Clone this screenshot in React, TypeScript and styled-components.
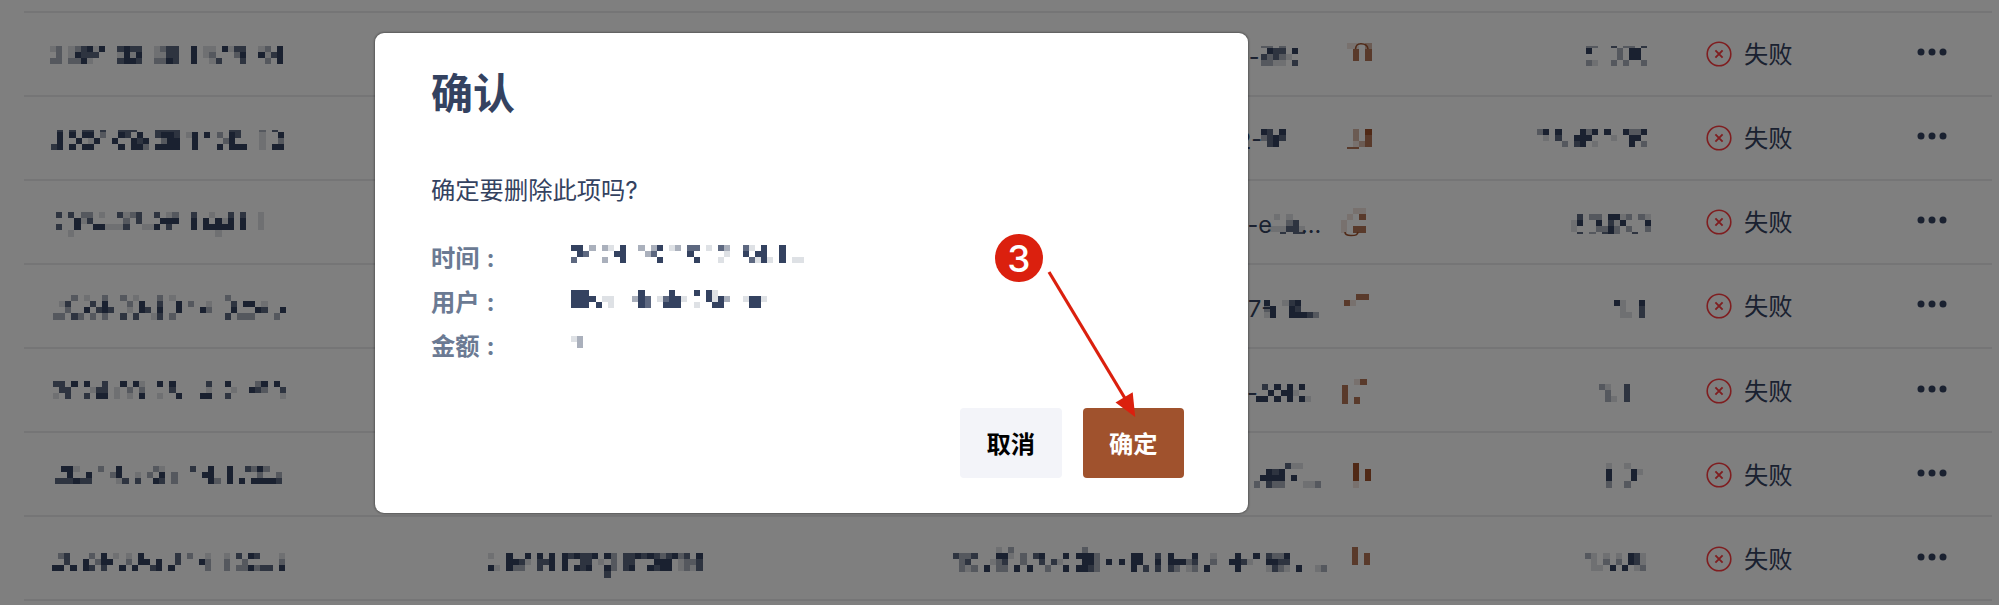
import React from 'react';
import styled, { createGlobalStyle } from 'styled-components';

const INK = '#344260';
const RUST = '#a0522d';
const CELL = 6.13;
const LEVELS: Record<string, number> = { '1': 0.16, '2': 0.42, '3': 0.8, '4': 1 };

const GlobalStyle = createGlobalStyle`
  * { box-sizing: border-box; }
  body {
    margin: 0;
    overflow: hidden;
    background: #fff;
    color: ${INK};
    font-family: Inter, "Noto Sans CJK SC", sans-serif;
    font-size: 24.3px;
  }
`;

const Page = styled.main`
  position: relative;
  width: 1999px;
  height: 605px;
  overflow: hidden;
`;

const Table = styled.section`
  display: flex;
  flex-direction: column;
  padding: 10.6px 7px 0 24px;
`;

const Row = styled.div`
  display: grid;
  grid-template-columns: 436px 480px 400px 105px 246px 199px 1fr;
  height: 84.12px;
  flex: none;
  border-top: 2px solid #eaeaec;
`;

const Cell = styled.div`
  display: flex;
  align-items: flex-start;
  min-width: 0;
  overflow: visible;
`;

const IdText = styled.span<{ $x: number }>`
  width: 0;
  white-space: pre;
  font-size: 23.5px;
  line-height: 28px;
  padding-top: 30px;
  margin-left: ${(p) => p.$x}px;
  margin-right: ${(p) => -p.$x}px;
`;

const Status = styled(Cell)`
  align-items: center;
  gap: 12.5px;
  padding: 1px 0 0 14.5px;
  line-height: 36px;
`;

const Actions = styled(Cell)`
  padding: 34.5px 0 0 26.3px;
`;

const Scrim = styled.div`
  position: absolute;
  inset: 0;
  display: flex;
  align-items: flex-start;
  padding: 32.5px 0 0 375px;
  background: rgba(0, 0, 0, 0.5);
`;

const Dialog = styled.div`
  display: flex;
  flex-direction: column;
  width: 872.5px;
  height: 480px;
  padding: 30px 63.5px 34.5px 56px;
  border-radius: 9px;
  background: #fff;
  box-shadow: 0 0 2px 1px rgba(0, 0, 0, 0.3);
`;

const Title = styled.h2`
  margin: 0;
  font-size: 42px;
  line-height: 62px;
  font-weight: 700;
`;

const Question = styled.p`
  margin: 47px 0 0;
  line-height: 36px;
`;

const Details = styled.dl`
  display: grid;
  grid-template-columns: 140px 1fr;
  grid-auto-rows: 44px;
  margin: 28px 0 0;
`;

const Label = styled.dt`
  display: flex;
  gap: 6px;
  color: #6b7a93;
  font-weight: 700;
  line-height: 44px;
`;

const Colon = styled.span`
  width: 10px;
  padding-left: 1px;
`;

const Value = styled.dd`
  display: flex;
  margin: 0;
`;

const Buttons = styled.div`
  display: flex;
  justify-content: flex-end;
  gap: 21px;
  margin-top: auto;
`;

const Button = styled.button<{ $primary?: boolean }>`
  width: 101.5px;
  height: 70px;
  padding: 1.5px 0 0;
  border: 0;
  border-radius: 4px;
  background: ${(p) => (p.$primary ? RUST : '#f3f4f9')};
  color: ${(p) => (p.$primary ? '#fff' : '#000')};
  font: inherit;
  font-weight: 700;
  line-height: 68px;
`;

const Badge = styled.div`
  position: absolute;
  left: 995px;
  top: 234px;
  width: 47.5px;
  height: 48px;
  border-radius: 50%;
  background: #db200e;
  color: #fff;
  font-size: 37px;
  font-weight: 500;
  line-height: 50px;
  text-align: center;
`;

const Arrow = styled.svg`
  position: absolute;
  left: 1040px;
  top: 262px;
`;

const MosaicSvg = styled.svg<{ $x: number; $y: number }>`
  display: block;
  flex: none;
  overflow: visible;
  margin: ${(p) => p.$y}px 0 0 ${(p) => p.$x}px;
`;

interface MosaicData {
  x: number;
  y: number;
  rows: string[];
  cap?: string;
  foot?: string;
  arc?: string;
}

function Mosaic({ x, y, rows, cap, foot, arc, color = INK }: MosaicData & { color?: string }) {
  const bands = rows.map((cells, r) => ({ cells, top: r * CELL, h: CELL }));
  if (cap) bands.push({ cells: cap, top: -2, h: 2 });
  if (foot) bands.push({ cells: foot, top: rows.length * CELL, h: 2 });
  return (
    <MosaicSvg $x={x} $y={y} width={1} height={rows.length * CELL} fill={color} shapeRendering="crispEdges">
      {bands.map((b) =>
        b.cells.split('').map((c, i) =>
          LEVELS[c] ? (
            <rect key={b.top + '-' + i} x={i * CELL} y={b.top} width={CELL} height={b.h} opacity={LEVELS[c]} />
          ) : null
        )
      )}
      {arc && <path d={arc} fill="none" stroke={color} strokeWidth="1.6" shapeRendering="auto" />}
    </MosaicSvg>
  );
}

interface RowData {
  time: MosaicData;
  user?: MosaicData;
  id: MosaicData;
  idText?: { x: number; text: string }[];
  link: MosaicData;
  amount: MosaicData;
}

/* x is measured from the left edge of the cell, y from the top of the row */
const ROWS: RowData[] = [
  {
    time: {
      x: 26, y: 33,
      rows: [
        '12.123414..3433..1233..4.11.4133..12.4',
        '.2.14333...1414..1133..4.12...24..4134',
        '22.2241....3443..2243..4..13...3...2.4',
      ],
    },
    id: { x: 320.5, y: 35.5, rows: ['.433.4', '32321.', '2211.3'], cap: '22.2' },
    idText: [{ x: 295, text: 'e-' }],
    link: { x: 6.7, y: 30, rows: ['11.2', '.3.3', '.3.3'], arc: 'M8.5 6C9 .5 12 .7 14 .7C17 .7 20.5 1 21 6' },
    amount: { x: 140.5, y: 35.5, rows: ['4....2.44.', '.....2.44.', '21..2.2..2'], cap: '22..3.22.3' },
  },
  {
    time: {
      x: 27, y: 35,
      rows: [
        '.4.4.44.2..43.4..3443.14.4.2.43...1..4',
        '.4..4.14..4..434..244..4....24....1..2',
        '34.4.44....4.442.4444..4...4.444..1.44',
      ],
      cap: '.3.3.33.3..333...3333........33...2.3',
    },
    id: { x: 321, y: 32, rows: ['43.4', '2343', '.34.'] },
    idText: [{ x: 297, text: '2-' }],
    link: { x: 6.5, y: 32, rows: ['.2.4', '.2.3', '.123'], foot: '33' },
    amount: { x: 91.5, y: 32, rows: ['24.4...424.4..4224', '.1.3..444...1..44', '....2.34.1.....4.2'] },
  },
  {
    time: {
      x: 32.3, y: 31,
      rows: [
        '3.3.22.1..3123..3.12..3..1..3.3..1',
        '...413.....2.3...444..4.4.414.4..1',
        '3..4..441113..114.3...4.44444.4..1',
        '..1.......................1',
      ],
    },
    id: { x: 327.7, y: 33, rows: ['.1.1', '...23', '111331'], foot: '..3.33' },
    idText: [{ x: 294, text: 'c-e' }, { x: 361, text: '...' }],
    link: { x: 1.3, y: 27, rows: ['..11', '.1.3', '1...', '1.33'], arc: 'M4 24C4 27 6 27.5 10 27.5C15 27.5 16.5 27 17 24' },
    amount: { x: 125.7, y: 33, rows: ['.3.22.4412.21', '14..4.314...4', '1...2242.2..2'], foot: '.3.2.342..3' },
  },
  {
    time: {
      x: 28.7, y: 30.5,
      rows: [
        '...2.1..2..2.1...2.1........2',
        '.13...3.4...2.4..3..4.2..1...3.44.1',
        '..2..4.343..1.43.4..4...42...4...43..4',
        '22.32.2.2..3.3..13.2........3.222...2',
      ],
    },
    id: { x: 324, y: 35, rows: ['4..134', '24..43', '14..44432'] },
    idText: [{ x: 308, text: '7-' }],
    link: { x: 4, y: 29.5, rows: ['..33', '31'] },
    amount: { x: 168.7, y: 35, rows: ['41..4', '.1..3', '.11.3'] },
  },
  {
    time: {
      x: 28.7, y: 31.5,
      rows: [
        '33.4.4..3..4.41..4.4.....3..4....24.4',
        '.33...133.1.2.2....3.....1...1..432..3',
        '1.3..3.44.1.1.4..1..4...44..3........1',
      ],
    },
    id: { x: 316, y: 35, rows: ['.3.4.4.4', '..4.441', '44.4.4.41'] },
    idText: [{ x: 307, text: '-' }],
    link: { x: 1.7, y: 29.5, rows: ['..13', '3', '3', '3.3'] },
    amount: { x: 154.3, y: 35, rows: ['21..3', '.2..3', '.21.3'] },
  },
  {
    time: {
      x: 30.7, y: 33,
      rows: [
        '.441...2..4.....21....3..4..4..3242',
        '..4..4...24..1.2.4.2....44..4....2..2',
        '333433....13.3..43.2.....42.4.4.44443',
      ],
    },
    id: { x: 314.3, y: 30, rows: ['.....311', '..434', '.4444.4', '2.322...112'] },
    link: { x: 13, y: 30, rows: ['4', '4.4', '4.4', '1'] },
    amount: { x: 160.7, y: 30, rows: ['1..1', '4...41', '4...4', '2..2'] },
  },
  {
    time: {
      x: 28.3, y: 35.5,
      rows: [
        '.23...2.4.1.1.4.....3.2..1..1.3.43...1',
        '..3..4.244..2.44.4..3...42..2..2.....2',
        '44.4.43.3..4.4..34.4.....2..2.224233.4',
      ],
    },
    user: {
      x: 28, y: 35.5,
      rows: [
        '1..4..4.4.4.434334.42.33434323423.4',
        '...4431.334.4..33.1.2.33...444.1223',
        '41.422..3.4.4.434..42.34..4344.1213',
        '...................3',
      ],
    },
    id: {
      x: 13, y: 29.3,
      rows: [
        '.......1.2...........2',
        '3223...441.2.34...4.4442.....44..3.4...4..1...4..4.3224',
        '.23...123..2..3.31...442.4.4.44..4.44423..2..4431..4433',
        '.212.4.22.4.4..2..4.4432.....4.3.3.32.12.4....4....1321.4..12',
      ],
    },
    link: { x: 11.7, y: 29.3, rows: ['3', '3.3', '3.3'] },
    amount: { x: 139.7, y: 35.5, rows: ['21.1.1.431', '.1.2.2.431', '.11.4.4.12'] },
  },
];

function FailIcon() {
  return (
    <svg width="26" height="26" viewBox="0 0 26 26" fill="none" stroke="#ff3c40" strokeWidth="1.6">
      <circle cx="13" cy="13" r="11.8" />
      <path d="M9.4 9.4 16.6 16.6M16.6 9.4 9.4 16.6" strokeWidth="1.9" />
    </svg>
  );
}

function MoreIcon() {
  return (
    <svg width="32" height="10" viewBox="0 0 32 10" fill={INK}>
      <circle cx="5" cy="5" r="3.5" />
      <circle cx="16" cy="5" r="3.5" />
      <circle cx="27" cy="5" r="3.5" />
    </svg>
  );
}

const DETAILS: { label: string; value: MosaicData }[] = [
  {
    label: '时间',
    value: {
      x: 0, y: 9,
      rows: [
        '44.2.21.4..2.24.12.33.1.32..31.4..4',
        '.43....44...23.....4.....1..4.44..4',
        '3....2..4.....4.....4...1....3141.4.11',
      ],
    },
  },
  {
    label: '用户',
    value: {
      x: 0, y: 10.5,
      rows: [
        '444........4....4...4.41',
        '4444.11...243.13441...4142..1441',
        '444.4.1....43..444..1..44....44',
      ],
    },
  },
  { label: '金额', value: { x: 0, y: 12, rows: ['12', '.2'] } },
];

export default function App() {
  return (
    <Page>
      <GlobalStyle />
      <Table>
        {ROWS.map((row, i) => (
          <Row key={i}>
            <Cell><Mosaic {...row.time} /></Cell>
            <Cell>{row.user && <Mosaic {...row.user} />}</Cell>
            <Cell>
              {row.idText?.map((t) => <IdText key={t.x} $x={t.x}>{t.text}</IdText>)}
              <Mosaic {...row.id} />
            </Cell>
            <Cell><Mosaic {...row.link} color={RUST} /></Cell>
            <Cell><Mosaic {...row.amount} /></Cell>
            <Status><FailIcon />失败</Status>
            <Actions><MoreIcon /></Actions>
          </Row>
        ))}
        <Row />
      </Table>
      <Scrim>
        <Dialog role="dialog">
          <Title>确认</Title>
          <Question>确定要删除此项吗?</Question>
          <Details>
            {DETAILS.map((d) => (
              <React.Fragment key={d.label}>
                <Label>{d.label}<Colon>:</Colon></Label>
                <Value><Mosaic {...d.value} /></Value>
              </React.Fragment>
            ))}
          </Details>
          <Buttons>
            <Button>取消</Button>
            <Button $primary>确定</Button>
          </Buttons>
        </Dialog>
      </Scrim>
      <Badge>3</Badge>
      <Arrow width="100" height="160" viewBox="1040 262 100 160" fill="#db200e">
        <path d="M1049 272 1126 400" stroke="#db200e" strokeWidth="3.2" />
        <path d="M1115.5 402.5 1132.7 392.3 1135.2 417Z" />
      </Arrow>
    </Page>
  );
}
